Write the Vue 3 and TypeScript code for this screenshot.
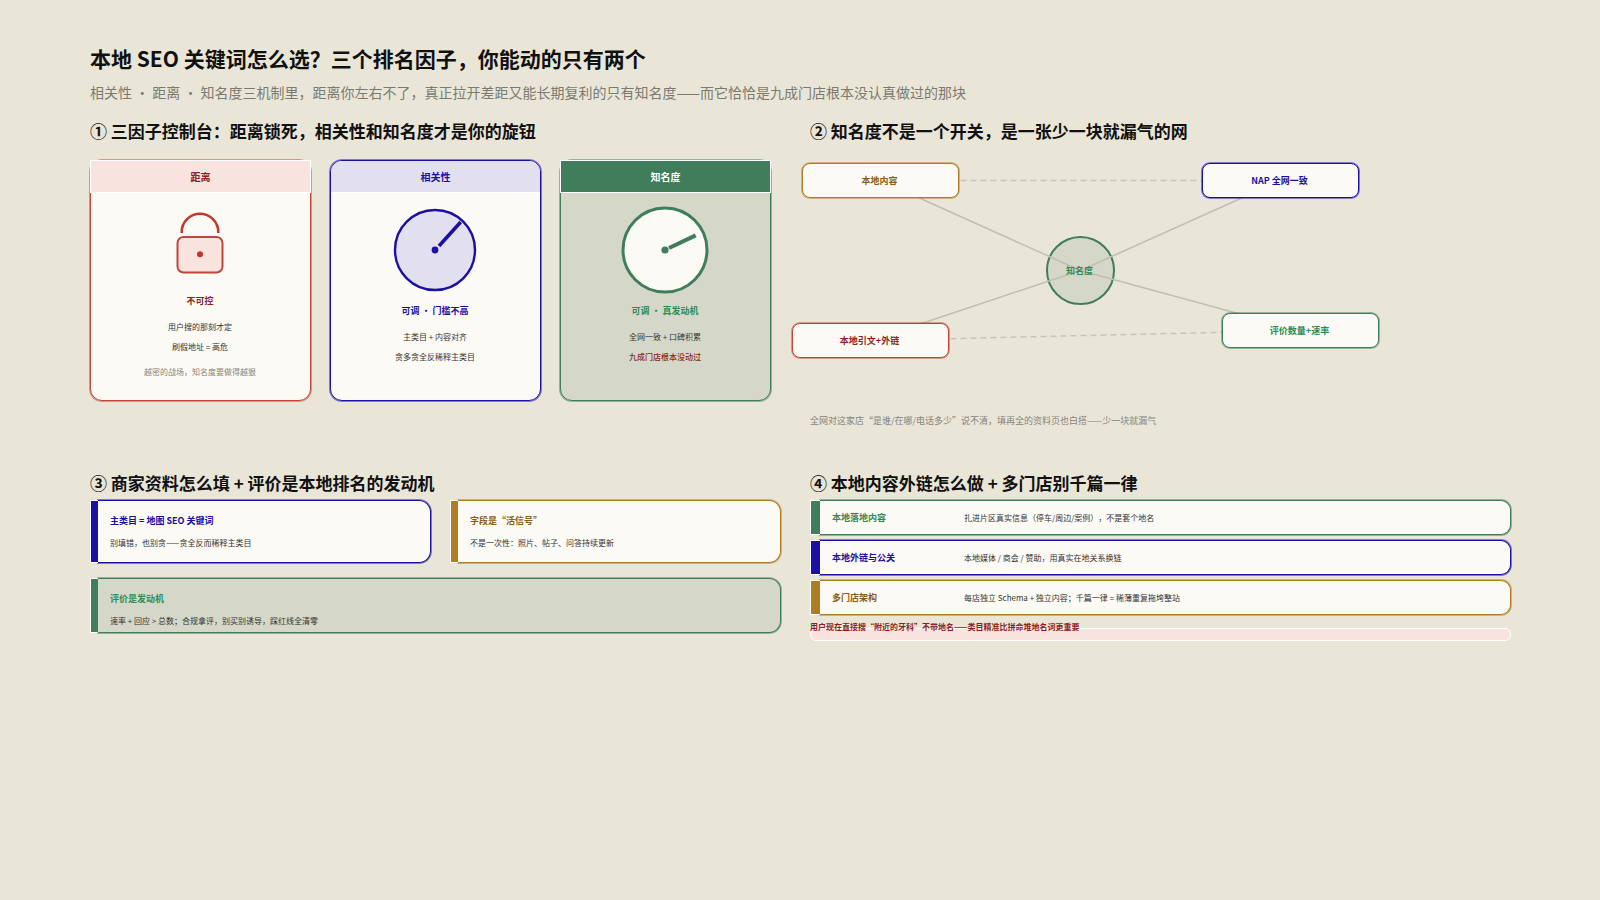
<script setup lang="ts">
interface Row {
  title: string;
  text: string;
  tone: string;
}
interface NetNode {
  label: string;
  tone: string;
  left: number;
  top: number;
}

const netCenter = { x: 270.5, y: 110.5 };

const netNodes: NetNode[] = [
  { label: "本地内容", tone: "gold", left: -8, top: 3 },
  { label: "NAP 全网一致", tone: "blue", left: 392, top: 3 },
  { label: "本地引文+外链", tone: "red", left: -18, top: 163 },
  { label: "评价数量+速率", tone: "green", left: 412, top: 153 },
];

const spokes = netNodes.map((n) => ({ x: n.left + 78.5, y: n.top + 17.5 }));

const storeRows: Row[] = [
  { title: "本地落地内容", text: "扎进片区真实信息（停车/周边/案例），不是套个地名", tone: "green" },
  { title: "本地外链与公关", text: "本地媒体 / 商会 / 赞助，用真实在地关系换链", tone: "blue" },
  { title: "多门店架构", text: "每店独立 Schema + 独立内容；千篇一律 = 稀薄重复拖垮整站", tone: "gold" },
];
</script>

<template>
  <div class="page">
    <h1 class="title">本地 SEO 关键词怎么选？三个排名因子，你能动的只有两个</h1>
    <p class="subtitle">相关性 ・ 距离 ・ 知名度三机制里，距离你左右不了，真正拉开差距又能长期复利的只有知名度——而它恰恰是九成门店根本没认真做过的那块</p>

    <div class="sections">
      <section>
        <h2 class="heading">① 三因子控制台：距离锁死，相关性和知名度才是你的旋钮</h2>
        <div class="cards">
          <div class="card tone-red">
            <div class="card-head">距离</div>
            <div class="visual visual-lock">
              <svg width="50" height="66" viewBox="0 0 50 66">
                <path d="M6.7 21 V20 A18.3 18.3 0 0 1 43.3 20 V21" fill="none" stroke="#c0392f" stroke-width="2.6" />
                <rect x="2.5" y="25" width="45" height="35.5" rx="6" fill="#f9e3df" stroke="#c0453c" stroke-width="2" />
                <circle cx="25" cy="42.3" r="3" fill="#c5332e" />
              </svg>
            </div>
            <div class="card-title red">不可控</div>
            <div class="line first">用户搜的那刻才定</div>
            <div class="line">刷假地址 = 高危</div>
            <div class="line note">越密的战场，知名度要做得越狠</div>
          </div>

          <div class="card tone-blue">
            <div class="card-head">相关性</div>
            <div class="visual">
              <svg width="90" height="90" viewBox="0 0 90 90">
                <circle cx="45" cy="45" r="40" fill="#e2e0ee" stroke="#1c0fa3" stroke-width="2.4" />
                <line x1="49" y1="41" x2="70.7" y2="17" stroke="#1c0fa3" stroke-width="3.5" />
                <circle cx="45" cy="45" r="3.4" fill="#1c0fa3" />
              </svg>
            </div>
            <div class="card-title blue">可调 ・ 门槛不高</div>
            <div class="line first">主类目 + 内容对齐</div>
            <div class="line">贪多贪全反稀释主类目</div>
          </div>

          <div class="card tone-green card-green">
            <div class="card-head">知名度</div>
            <div class="visual">
              <svg width="90" height="90" viewBox="0 0 90 90">
                <circle cx="45" cy="45" r="42" fill="#fcfaf5" stroke="#3f7d5b" stroke-width="3" />
                <line x1="49" y1="43" x2="75.7" y2="30.4" stroke="#3f7d5b" stroke-width="4" />
                <circle cx="45" cy="45" r="3.6" fill="#3f7d5b" />
              </svg>
            </div>
            <div class="card-title green">可调 ・ 真发动机</div>
            <div class="line first">全网一致 + 口碑积累</div>
            <div class="line alert">九成门店根本没动过</div>
          </div>
        </div>
      </section>

      <section>
        <h2 class="heading">② 知名度不是一个开关，是一张少一块就漏气的网</h2>
        <div class="net">
          <svg class="net-lines" width="600" height="240" viewBox="0 0 600 240">
            <circle :cx="netCenter.x" :cy="netCenter.y" r="33.5" fill="#d5d8c8" stroke="#3f7d5b" stroke-width="2" />
            <line
              v-for="(s, index) in spokes"
              :key="index"
              :x1="s.x"
              :y1="s.y"
              :x2="netCenter.x"
              :y2="netCenter.y"
              stroke="#c2beaf"
              stroke-width="1.5"
            />
            <line :x1="spokes[0].x" :y1="spokes[0].y" :x2="spokes[1].x" :y2="spokes[1].y" stroke="#c8c4b5" stroke-width="1.5" stroke-dasharray="6 4" />
            <line :x1="spokes[2].x" :y1="spokes[2].y" :x2="spokes[3].x" :y2="spokes[3].y" stroke="#c8c4b5" stroke-width="1.5" stroke-dasharray="6 4" />
          </svg>
          <div class="net-hub">知名度</div>
          <div
            v-for="node in netNodes"
            :key="node.label"
            class="net-node"
            :class="'tone-' + node.tone"
            :style="{ left: node.left + 'px', top: node.top + 'px' }"
          >
            {{ node.label }}
          </div>
        </div>
        <p class="caption">全网对这家店“是谁/在哪/电话多少”说不清，填再全的资料页也白搭——少一块就漏气</p>
      </section>

      <section>
        <h2 class="heading heading-tight">③ 商家资料怎么填 + 评价是本地排名的发动机</h2>
        <div class="callouts">
          <div class="callout tone-blue">
            <div class="bar"></div>
            <div class="callout-body tall">
              <div class="callout-title">主类目 = 地图 SEO 关键词</div>
              <div class="callout-text">别填错，也别贪——贪全反而稀释主类目</div>
            </div>
          </div>
          <div class="callout tone-gold">
            <div class="bar"></div>
            <div class="callout-body tall">
              <div class="callout-title">字段是“活信号”</div>
              <div class="callout-text">不是一次性：照片、帖子、问答持续更新</div>
            </div>
          </div>
          <div class="callout tone-green wide">
            <div class="bar"></div>
            <div class="callout-body filled">
              <div class="callout-title">评价是发动机</div>
              <div class="callout-text">速率 + 回应 &gt; 总数；合规拿评，别买别诱导，踩红线全清零</div>
            </div>
          </div>
        </div>
      </section>

      <section>
        <h2 class="heading heading-tight">④ 本地内容外链怎么做 + 多门店别千篇一律</h2>
        <div class="rows">
          <div v-for="row in storeRows" :key="row.title" class="callout" :class="'tone-' + row.tone">
            <div class="bar bar-wide"></div>
            <div class="row-body">
              <div class="row-title">{{ row.title }}</div>
              <div class="row-text">{{ row.text }}</div>
            </div>
          </div>
        </div>
        <div class="warn-text">用户现在直接搜“附近的牙科”不带地名——类目精准比拼命堆地名词更重要</div>
        <div class="warn-box"></div>
      </section>
    </div>
  </div>
</template>

<style scoped>
.page {
  box-sizing: border-box;
  width: 1600px;
  height: 900px;
  padding: 43px 89px 0 90px;
  background: #e9e6d8;
  color: #111;
  font-family: "Noto Sans CJK SC", "Noto Sans", sans-serif;
  text-spacing-trim: space-all;
  overflow: hidden;
}
.title {
  margin: 0;
  font-size: 21px;
  line-height: 30px;
  font-weight: 700;
}
.subtitle {
  margin: 9px 0 0;
  font-size: 14px;
  line-height: 20px;
  color: #7b7a70;
}
.sections {
  display: grid;
  grid-template-columns: 691px 701px;
  column-gap: 29px;
  row-gap: 43px;
  margin-top: 17px;
}
.heading {
  margin: 0 0 17px;
  font-size: 17px;
  line-height: 24px;
  font-weight: 700;
}
.heading-tight {
  margin-bottom: 5px;
}

/* tones: a 1px line plus a soft halo reads as the 1.5px stroke of the reference */
.tone-red {
  --tone: #c4453d;
  --tone-soft: rgba(196, 69, 61, 0.5);
  --tone-pale: #f9e3df;
  --tone-text: #8c1f1f;
}
.tone-blue {
  --tone: #1c0fa3;
  --tone-soft: rgba(28, 15, 163, 0.5);
  --tone-pale: #e2e0ee;
  --tone-text: #1c0fa3;
}
.tone-green {
  --tone: #3f7d5b;
  --tone-soft: rgba(63, 125, 91, 0.5);
  --tone-pale: #3f7d5b;
  --tone-text: #2e8b57;
}
.tone-gold {
  --tone: #b07d24;
  --tone-soft: rgba(176, 125, 36, 0.5);
  --tone-pale: #f6ecd6;
  --tone-text: #8a5e14;
}

/* cards */
.cards {
  display: grid;
  grid-template-columns: 221px 211px 211px;
  column-gap: 19px;
}
.card {
  box-sizing: border-box;
  height: 241px;
  padding-right: 1px;
  border: 1px solid var(--tone);
  box-shadow: 0 0 0 1px var(--tone-soft);
  border-radius: 12px;
  background: #fcfaf5;
  text-align: center;
}
.card-green {
  background: #d5d8c8;
}
.card-head {
  box-sizing: border-box;
  height: 33px;
  margin: -1px -2px 0 -1px;
  border: 1px solid #fff;
  background: var(--tone-pale);
  color: var(--tone-text);
  font-size: 10px;
  line-height: 31px;
  font-weight: 700;
}
.tone-blue .card-head {
  margin: 0 -1px 0 0;
  height: 32px;
  line-height: 31px;
  border-width: 0 0 1px;
  border-radius: 11px 11px 0 0;
}
.tone-green .card-head {
  color: #fff;
}
.visual {
  display: flex;
  justify-content: center;
  align-items: center;
  height: 92.5px;
  margin: 11px 0 7.5px;
}
.visual-lock {
  height: 82px;
}
.card-title {
  font-size: 9px;
  line-height: 14px;
  font-weight: 700;
}
.red {
  color: #8c1f1f;
}
.blue {
  color: #1c0fa3;
}
.green {
  color: #2e8b57;
}
.line {
  margin-top: 6px;
  font-size: 8px;
  line-height: 14px;
  color: #333;
}
.line.first {
  margin-top: 12px;
}
.line.note {
  margin-top: 11px;
  color: #85847b;
}
.line.alert {
  color: #8c1f1f;
  font-weight: 500;
}

/* net diagram */
.net {
  position: relative;
  height: 254px;
}
.net-lines {
  position: absolute;
  left: 0;
  top: 0;
  overflow: visible;
}
.net-hub {
  position: absolute;
  left: 236px;
  top: 77px;
  width: 67px;
  height: 67px;
  display: flex;
  align-items: center;
  justify-content: center;
  font-size: 9px;
  font-weight: 700;
  color: #2e8b57;
}
.net-node {
  position: absolute;
  box-sizing: border-box;
  width: 157px;
  height: 35px;
  padding-right: 2px;
  border: 1px solid var(--tone);
  box-shadow: 0 0 0 1px var(--tone-soft);
  border-radius: 8px;
  background: #fcfaf5;
  color: var(--tone-text);
  display: flex;
  align-items: center;
  justify-content: center;
  font-size: 9px;
  font-weight: 700;
}
.caption {
  margin: 0;
  font-size: 9px;
  line-height: 14px;
  color: #85847b;
}

/* callouts */
.callouts {
  display: grid;
  grid-template-columns: 341px 331px;
  column-gap: 19px;
  row-gap: 15px;
}
.callout {
  display: flex;
}
.wide {
  grid-column: 1 / 3;
}
.bar {
  box-sizing: border-box;
  position: relative;
  flex: none;
  width: 8px;
  border: 1px solid #fff;
  border-right: 0;
  background: var(--tone);
}
.bar-wide {
  width: 10px;
}
.callout-body {
  box-sizing: border-box;
  flex: 1;
  border: 1px solid var(--tone);
  border-left: 0;
  box-shadow: 0 0 0 1px var(--tone-soft);
  border-radius: 0 12px 12px 0;
  background: #fcfaf5;
  padding: 13px 13px 0 12px;
}
.callout-body.tall {
  height: 62.5px;
}
.callout-body.filled {
  height: 55px;
  background: #d5d8c8;
}
.callout-title {
  font-size: 9px;
  line-height: 14px;
  font-weight: 700;
  color: var(--tone-text);
}
.callout-text {
  margin-top: 8px;
  font-size: 8px;
  line-height: 14px;
  color: #333;
}

/* rows */
.rows {
  display: flex;
  flex-direction: column;
  gap: 5.5px;
}
.row-body {
  box-sizing: border-box;
  flex: 1;
  height: 34.5px;
  display: flex;
  align-items: center;
  padding-left: 12px;
  border: 1px solid var(--tone);
  border-left: 0;
  box-shadow: 0 0 0 1px var(--tone-soft);
  border-radius: 0 10px 10px 0;
  background: #fcfaf5;
}
.row-title {
  flex: none;
  width: 132px;
  font-size: 9px;
  font-weight: 700;
  color: var(--tone-text);
}
.row-text {
  font-size: 8px;
  color: #333;
}
.warn-text {
  position: relative;
  margin-top: 5px;
  font-size: 8px;
  line-height: 14px;
  font-weight: 700;
  color: #8c1f1f;
}
.warn-box {
  box-sizing: border-box;
  height: 13px;
  margin-top: -6px;
  border: 1px solid #fff;
  border-radius: 6px;
  background: #f9e3df;
}
</style>

<style>
html,
body {
  margin: 0;
  background: #e9e6d8;
}
</style>
